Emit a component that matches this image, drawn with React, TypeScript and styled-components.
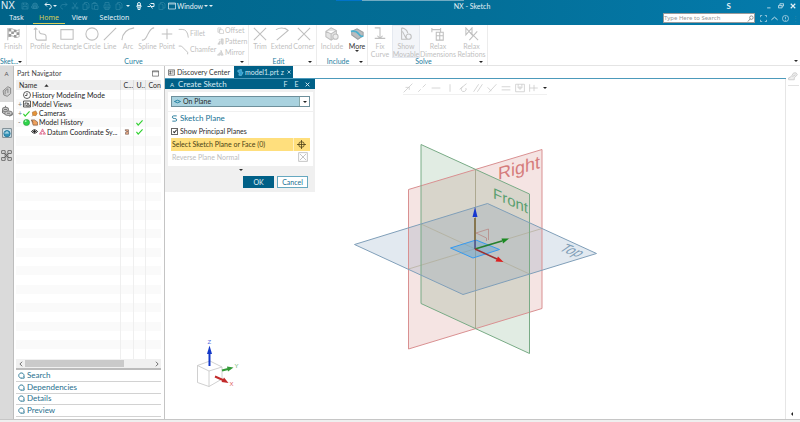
import React from "react";
import styled, { createGlobalStyle, css } from "styled-components";

const Global = createGlobalStyle`
  *, *::before, *::after { box-sizing: border-box; }
  html, body, #root { height: 100%; margin: 0; }
  body { overflow: hidden; font-family: Lato, "Noto Sans", sans-serif; font-size: 7px; line-height: 9px; color: #2b2b2b; background: #fff; }
  button, input, select { font: inherit; color: inherit; margin: 0; padding: 0; border: 0; background: none; border-radius: 0; }
  svg { display: block; flex: none; }
`;

const shapes: Record<string, React.ReactNode> = {
  save: <path d="M2 2h10l2 2v10H2zM5 2v4h6V2M4 14V9h8v5" />,
  saveAll: <path fill="currentColor" fillOpacity=".5" d="M3 7a5 5 0 0 1 10 0c3 1 2 6-1 6H4C0 13 0 8 3 7zM5 8h6v5H5z" />,
  undo: <path strokeWidth="2" d="M6 1L2 5l4 4M2 5h8c6 0 6 9 0 9" />,
  redo: <path d="M10 1l4 4-4 4M14 5H6c-6 0-6 9 0 9" />,
  cut: <path d="M4 1l6 10M12 1L6 11M6 12a2 2 0 1 1-4 0 2 2 0 0 1 4 0M14 12a2 2 0 1 1-4 0 2 2 0 0 1 4 0" />,
  copy: <path d="M5 4V1h6l3 3v8h-4M2 4h6l2 2v9H2z" />,
  paste: <path d="M6 14H2V3h10v3M5 3V1h4v2M7 7h7v8H7z" />,
  print: <path d="M4 6V1h8v5M2 6h12v6H2zM4 10h8v5H4z" />,
  mic: <path strokeWidth="2" d="M8 1a3 3 0 0 1 0 6 3 3 0 0 1 0-6M4 7h8v3H4zM6 10v5h4v-5" />,
  swap: <path strokeWidth="2" d="M1 9h6M5 5l4 4M14 9H8l3 4M7 3h7v6" />,
  window: <path d="M1 2h14v12H1zM1 4h14" />,
  flag: (
    <>
      <path d="M2 1v14" />
      <path d="M3 2q3-1 6 1t6 0v8q-3 2-6 0t-6 0z" />
      <path stroke="none" fill="#999" d="M3 2h3v3H3zM9 3h3v3H9zM6 5h3v3H6zM12 6h3v3h-3zM3 8h3v3H3zM9 9h3v3H9z" />
    </>
  ),
  profile: <path d="M3 1v10q0 4 3 4h9v-4q0-3-4-3-4 0-4-4M1 3l2-2 2 2" />,
  rectangle: <path d="M1 3h14v11H1z" />,
  circle: <circle cx="8" cy="8" r="7" />,
  line: <path d="M1 15L15 1" />,
  arc: <path d="M1 15Q2 3 15 1" />,
  spline: <path d="M1 15c5 0 5-4 7-7s3-7 7-7" />,
  point: <path d="M8 2v12M2 8h12" />,
  fillet: <path d="M1 2h5q8 0 9 12" />,
  chamfer: <path d="M1 3h4l9 9v3" />,
  offset: <path d="M2 2h7v3H5v7H2zM6 6h7l2 3v6H6z" />,
  pattern: <path fill="currentColor" fillOpacity=".5" d="M9 2h5v12h-3zM7 7v7H2zM4 4h3" />,
  mirror: <path fill="currentColor" fillOpacity=".4" d="M9 14V3l5 11zM7 14V8l-6 6z" />,
  trim: <path d="M1 1l14 14M15 1L1 15" />,
  extend: <path d="M1 3q8-4 14 1L2 15M11 1l4 3" />,
  include: (
    <>
      <path fill="#e4e4e4" d="M1 5l6-4 6 3v7l-6 4-6-4zM1 5l6 3 6-4M7 8v7" />
      <circle cx="12" cy="11" r="3" fill="#eee" />
    </>
  ),
  more: (
    <>
      <path fill="#b9bcbe" stroke="#9ca1a4" d="M2 5l6-3 7 4v4l-6 4-7-5z" />
      <path stroke="#4ab0cf" strokeWidth="2" d="M1 5q6-1 9 3t5 2" />
    </>
  ),
  fix: <path d="M2 1h6v12M2 13h12M5 10l3 3 3-3" />,
  movable: <path d="M3 1v13h7M3 1q6 1 7 6M11 8a3 3 0 1 1 0 6 3 3 0 0 1 0-6M8 13l-4-8" />,
  dims: <path d="M1 1v5M11 1v5M1 3h10M6 6h8v9H6zM10 6v9M6 10h8" />,
  relations: <path d="M1 1v8l7-8v8zM14 5L5 15M6 6l9 9" />,
  search: <path d="M10 2a4 4 0 1 1 0 8 4 4 0 0 1 0-8M7 9l-5 6" />,
  full: <path d="M1 5V1h4M11 1h4v4M15 11v4h-4M5 15H1v-4" />,
  up: <path strokeWidth="2" d="M1 11l7-6 7 6" />,
  help: <path d="M8 1a7 7 0 1 1 0 14A7 7 0 0 1 8 1M8 4v5M8 11v2" />,
  min: <path d="M3 13h9" />,
  restore: <path d="M5 6V2h10v6h-4M1 7h10v6H1z" />,
  close: <path d="M2 2l12 12M14 2L2 14" />,
  clock: <path d="M8 1a7 7 0 1 1 0 14A7 7 0 0 1 8 1M8 4v5H4" />,
  views: <path d="M1 2h14v12H1zM4 12V6h5M7 12l3-6 3 6z" />,
  check: <path stroke="#2ed12e" strokeWidth="2.6" d="M1 9l4 5L15 3" />,
  camera: <path fill="#e59337" stroke="#a8703a" d="M3 5l8-3 3 6-3 5-7-1zM4 12l-2 3" />,
  ball: (
    <>
      <circle cx="8" cy="8" r="7" fill="#2fd44b" stroke="#219b35" />
      <circle cx="6" cy="5" r="2" fill="#b5f5bf" stroke="none" />
    </>
  ),
  folder: <path fill="#efa15d" stroke="#705040" d="M1 2h7l7 5v7H5zM1 2l4 6" />,
  eye: <path strokeWidth="2" d="M1 8q7-8 14 0-7 8-14 0M8 4v8M4 8h8" />,
  datum: <path fill="#f7b9cb" stroke="#d34d79" d="M8 2l3 6H5zM4 9l3 5H1zM12 9l3 5H9z" />,
  sheet: <path fill="#efb08c" stroke="#5a4037" d="M3 2h9v12H4V9l6-2-6-2z" />,
  clip: <path stroke="#888" fill="#cfcfcf" d="M4 13L3 7l7-6 4 2v8l-5 4zM6 12V7l4-3v6" />,
  gears: (
    <>
      <ellipse cx="6" cy="6" rx="4" ry="3" fill="#c9c9c9" stroke="#858585" />
      <ellipse cx="10" cy="11" rx="5" ry="3" fill="#c9c9c9" stroke="#858585" />
      <path stroke="#777" d="M2 7v3l3 2M15 11v2l-4 2M6 3V1M4 6h4M8 11h4" />
    </>
  ),
  globe: (
    <>
      <path stroke="#6b7c85" fill="#d6e7ef" d="M1 1h14v14H1z" />
      <circle cx="8" cy="9" r="5" fill="#3293b8" stroke="#23779b" />
      <path stroke="#d8eef5" d="M4 8h7M8 5v3" />
    </>
  ),
  nodes: <path stroke="#666" fill="#eee" d="M4 4l8 8M12 4l-8 8M1 1h5v4H1zM10 1h5v4h-5zM1 11h5v4H1zM10 11h5v4h-5zM6 6h4v4H6z" />,
  panel: <path d="M1 2h14v12H1zM1 4h14" />,
  doc: <path d="M1 2h14v12H1zM4 5h3v2H4zM9 5h4M4 9h3v2H4zM9 9h4" />,
  part: <path stroke="#76c7e6" fill="#2f9fd0" d="M2 3l8-2v5l4 2-4 7-6-1 2-6-4-1z" />,
  plane: <path stroke="#167a9c" d="M1 8l7-3 7 3-7 3z" />,
  sketch: <path strokeWidth="2" d="M13 2H6Q3 2 3 5t5 3 5 3-3 3H3" />,
  target: <path d="M8 0v16M0 8h16M8 3a5 5 0 1 1 0 10A5 5 0 0 1 8 3" />,
  flip: <path d="M1 1h14v14H1zM3 3l10 10M13 3L3 13" />,
  loop: <path strokeWidth="2" d="M9 14A6 6 0 1 1 13 11M8 14h6v-4" />,
  left: <path strokeWidth="2" d="M11 2L5 8l6 6" />,
  right: <path strokeWidth="2" d="M5 2l6 6-6 6" />,
  sortUp: <path stroke="none" fill="currentColor" d="M1 12L8 4l7 8z" />,
  stamp: <path stroke="#ccc" fill="#eee" d="M1 11l4-2 4-6h4l2 3-5 5v3H1zM7 9l5-3" />,
  snap1: <path d="M1 15L15 1M4 7h6v4" />,
  snap2: <path d="M2 14l4-4M9 7l5-5" />,
  snap3: <path d="M1 8h14" />,
  snap4: <path d="M8 2v12" />,
  snap5: <path d="M1 10L12 1M6 6a4 4 0 1 0 5 2" />,
  snap6: <path d="M1 14L9 2M7 14l8-12" />,
  snap7: <path d="M1 7l6 6M3 15L15 2" />,
  snap8: <path d="M1 6h14M1 11h14" />,
  snap9: <path d="M1 2h14v12H1zM5 2v6h6V2M8 5v6" />,
  snap10: <path d="M1 2v12M1 8h13M8 3v10" />,
};

const Icon = ({ n, s = 8, w = 1.4 }: { n: string; s?: number; w?: number }) => (
  <svg width={s} height={s} viewBox="0 0 16 16" fill="none" stroke="currentColor" strokeWidth={w} aria-hidden="true">
    {shapes[n]}
  </svg>
);

const Shell = styled.div`
  display: flex;
  flex-direction: column;
  height: 100vh;
`;
const Header = styled.header`
  position: relative;
  display: flex;
  flex-direction: column;
  height: 25px;
  flex: none;
  color: #e6f1f6;
  background: linear-gradient(90deg, #006388, #036f98 60%, #047bac);
`;
const Progress = styled.div`
  position: absolute;
  top: 0;
  left: 42%;
  width: 16%;
  height: 1px;
  background: linear-gradient(90deg, #0073c9 20%, #71abc3 20%);
`;
const TitleBar = styled.div`
  display: grid;
  grid-template-columns: 1fr auto 1fr;
  align-items: center;
  height: 12px;
`;
const QuickBar = styled.div`
  display: flex;
  align-items: center;
`;
const Brand = styled.span`
  width: 20px;
  padding-left: 1px;
  font-family: "Liberation Sans", Arial, sans-serif;
  font-size: 10px;
  line-height: 12px;
`;
const QuickButton = styled.button<{ $w?: number; $dim?: boolean }>`
  display: flex;
  flex: none;
  align-items: center;
  justify-content: center;
  gap: 1px;
  width: ${(p) => p.$w ?? 10}px;
  height: 12px;
  color: ${(p) => (p.$dim ? "#2d85a5" : "#e6f1f6")};
`;
const Caret = styled.span`
  border: 2px solid transparent;
  border-top-color: currentColor;
  border-bottom: 0;
`;
const AppTitle = styled.span`
  padding-left: 144px;
`;
const WinButtons = styled.div`
  display: flex;
  justify-content: flex-end;
  align-items: center;
  padding-right: 1px;
`;
const Session = styled.b`
  margin-right: 32px;
  font-size: 8px;
`;
const MenuBar = styled.nav`
  display: flex;
  align-items: center;
  height: 13px;
  padding-bottom: 1px;
`;
const MenuItem = styled.button<{ $w: number; $active?: boolean }>`
  width: ${(p) => p.$w}px;
  height: 11px;
  border-bottom: 1px solid ${(p) => (p.$active ? "#d9cf5a" : "transparent")};
  color: ${(p) => (p.$active ? "#d9cf5a" : "#e6f1f6")};
  font-family: "Noto Sans", sans-serif;
`;
const SearchBox = styled.label`
  display: flex;
  align-items: center;
  width: 92px;
  height: 10px;
  margin-left: auto;
  color: #555;
  background: #fff;
  border: 1px solid #9a9a9a;
`;
const SearchInput = styled.input`
  flex: 1;
  min-width: 0;
  font-family: "Noto Sans", sans-serif;
  font-size: 6px;
  &::placeholder { color: #999; opacity: 1; }
`;
const MenuIcons = styled.div`
  display: flex;
  padding-left: 2px;
`;

const Ribbon = styled.section`
  display: flex;
  flex: none;
  height: 41px;
  background: #fff;
  border-bottom: 1px solid #e4e4e4;
`;
const Group = styled.div<{ $w: number }>`
  display: flex;
  flex-direction: column;
  flex: none;
  width: ${(p) => p.$w}px;
  border-right: 1px solid #ececec;
`;
const Tools = styled.div<{ $cols: string }>`
  display: grid;
  grid-template-columns: ${(p) => p.$cols};
  height: 33px;
`;
const Tool = styled.button<{ $on?: boolean; $selected?: boolean }>`
  display: flex;
  flex-direction: column;
  align-items: center;
  padding-top: 2px;
  white-space: nowrap;
  line-height: 8px;
  color: ${(p) => (p.$on ? "#333" : "#bfbfbf")};
  ${(p) => p.$selected && css`background: #f3f5f9; box-shadow: inset 0 0 0 1px #e5e9f0;`}
`;
const ToolLabel = styled.span`
  margin-top: 1px;
  white-space: pre;
  text-align: center;
`;
const SmallTools = styled.div`
  display: flex;
  flex-direction: column;
  justify-content: space-around;
`;
const SmallTool = styled.button`
  display: flex;
  align-items: center;
  gap: 1px;
  color: #bfbfbf;
`;
const GroupFoot = styled.div`
  display: flex;
  align-items: center;
  height: 7px;
  padding-right: 4px;
  color: #1d7d9e;
  line-height: 7px;
  > span:first-child { flex: 1; text-align: center; }
  > span:last-child { color: #222; }
`;
const RibbonEnd = styled.div`
  flex: 1;
  display: flex;
  align-items: flex-end;
  justify-content: flex-end;
  padding: 0 2px 3px 0;
`;

const Body = styled.main`
  display: flex;
  flex: 1;
  min-height: 0;
`;
const Rail = styled.aside`
  display: flex;
  flex-direction: column;
  align-items: stretch;
  width: 14px;
  background: #dadada;
  border-right: 1px solid #bdbdbd;
`;
const RailButton = styled.button<{ $h: number; $active?: boolean }>`
  display: flex;
  align-items: center;
  justify-content: center;
  height: ${(p) => p.$h}px;
  color: #555;
  font-size: 6px;
  background: ${(p) => (p.$active ? "#fff" : "transparent")};
`;
const Navigator = styled.section`
  display: flex;
  flex-direction: column;
  width: 151px;
  padding: 0 3px 2px 2px;
  border-right: 1px solid #c4c4c4;
`;
const NavTitle = styled.div`
  display: flex;
  align-items: center;
  justify-content: space-between;
  height: 14px;
  padding: 1px 2px 0 1px;
  color: #444;
`;
const TreeWrap = styled.div`
  flex: 1;
  min-height: 0;
`;
const Tree = styled.table`
  width: 100%;
  height: 100%;
  border-collapse: collapse;
  table-layout: fixed;
`;
const Th = styled.th<{ $w?: number }>`
  width: ${(p) => (p.$w ? `${p.$w}px` : "auto")};
  height: 10px;
  padding: 0 0 0 3px;
  overflow: hidden;
  text-align: left;
  font-weight: 400;
  white-space: nowrap;
  background: #efefef;
  border-right: 1px solid #ddd;
  &:last-child { border-right: 0; }
`;
const SortLabel = styled.span`
  display: flex;
  align-items: center;
  gap: 7px;
`;
const Row = styled.tr`
  &:nth-child(even) { background: #fafafa; }
`;
const Td = styled.td`
  height: 9px;
  padding: 0;
  line-height: 8px;
  white-space: nowrap;
  border-right: 1px solid #efefef;
  &:last-child { border-right: 0; }
  > svg { margin: 0 auto; }
`;
const Node = styled.div<{ $indent: number }>`
  display: flex;
  align-items: center;
  gap: 1px;
  padding-left: ${(p) => p.$indent}px;
  color: #1c1c1c;
`;
const Twist = styled.span`
  width: 4px;
  color: #777;
`;
const HScroll = styled.div`
  display: flex;
  align-items: center;
  height: 9px;
  background: #f0f0f0;
`;
const ScrollButton = styled.button`
  display: flex;
  width: 9px;
  justify-content: center;
  color: #444;
`;
const Thumb = styled.div`
  width: 99px;
  height: 7px;
  margin-right: auto;
  background: #cacaca;
`;
const Sections = styled.div`
  display: grid;
  grid-auto-rows: 1fr;
  height: 49px;
  border-top: 2px solid #bcbcbc;
`;
const SectionButton = styled.button`
  display: flex;
  align-items: center;
  gap: 2px;
  padding-left: 2px;
  font-size: 8px;
  color: #1f6f8e;
  border-bottom: 1px solid #d2d2d2;
`;

const Workspace = styled.section`
  display: flex;
  flex-direction: column;
  flex: 1;
  min-width: 0;
`;
const Tabs = styled.div`
  display: flex;
  height: 13px;
  border-bottom: 1px solid #4c9abb;
`;
const Tab = styled.button<{ $active?: boolean }>`
  display: flex;
  align-items: center;
  gap: ${(p) => (p.$active ? 1 : 2)}px;
  width: ${(p) => (p.$active ? 59 : 69)}px;
  padding-left: 3px;
  white-space: nowrap;
  color: ${(p) => (p.$active ? "#d5ebf3" : "#333")};
  background: ${(p) => (p.$active ? "#006087" : "#fff")};
  > span { padding: 0 2px 0 1px; }
`;
const Canvas = styled.div`
  position: relative;
  flex: 1;
  min-height: 0;
  border-right: 1px solid #e6e6e6;
`;
const Scene = styled.svg`
  position: absolute;
  inset: 0;
  width: 100%;
  height: 100%;
  font-family: "Liberation Sans", Arial, sans-serif;
`;
const SnapBar = styled.div`
  position: absolute;
  left: 238px;
  top: 3px;
  display: flex;
  align-items: center;
  gap: 4px;
  height: 13px;
  color: #c8c8c8;
  border-bottom: 1px solid #f0f0f0;
  > button { display: flex; }
  > button:last-child { color: #222; }
`;
const RightStrip = styled.aside`
  display: flex;
  flex-direction: column;
  align-items: center;
  justify-content: space-between;
  width: 14px;
  padding-bottom: 2px;
`;
const StripTool = styled.button`
  display: flex;
  justify-content: center;
  align-items: center;
  width: 11px;
  height: 20px;
  border-bottom: 1px solid #e2e2e2;
`;
const StripArrow = styled.button`
  margin-right: 3px;
  margin-bottom: 1px;
  border: 2px solid transparent;
  border-right-color: #222;
  border-left: 0;
`;
const Status = styled.footer`
  flex: none;
  height: 3px;
  background: #efefef;
  border-top: 1px solid #c6c6c6;
`;

const Dialog = styled.form`
  position: absolute;
  left: 0;
  top: 0;
  width: 150px;
  padding: 0 2px 4px 3px;
  background: #f0f0f0;
`;
const DialogTitle = styled.div`
  display: flex;
  align-items: center;
  gap: 4px;
  height: 10px;
  margin: 0 -2px 3px -3px;
  padding: 0 4px 0 5px;
  color: #d8ebf3;
  background: #006087;
  > span:first-child { font-size: 6px; }
  > span:nth-child(2) { flex: 1; font-size: 8px; }
  > button { display: flex; width: 7px; justify-content: center; }
`;
const Card = styled.div`
  display: flex;
  flex-direction: column;
  margin-bottom: 1px;
  padding: 4px 3px;
  background: #fff;
`;
const PlaneCard = styled(Card)`
  padding: 1px 3px 3px;
`;
const Combo = styled.label`
  display: flex;
  align-items: center;
  gap: 2px;
  height: 11px;
  padding-left: 2px;
  background: #a9d2df;
  border: 1px solid #6d8f9b;
`;
const Select = styled.select`
  flex: 1;
  appearance: none;
`;
const ComboArrow = styled.span`
  display: flex;
  align-items: center;
  justify-content: center;
  width: 10px;
  height: 9px;
  color: #222;
  background: #fff;
  border-left: 1px solid #8aa;
`;
const CardTitle = styled.div`
  display: flex;
  align-items: center;
  gap: 2px;
  height: 11px;
  font-size: 8px;
  color: #177294;
`;
const CheckRow = styled.label`
  display: flex;
  align-items: center;
  gap: 2px;
  height: 14px;
`;
const Box = styled.input`
  appearance: none;
  display: grid;
  place-items: center;
  width: 7px;
  height: 7px;
  border: 1px solid #666;
  &:checked::after {
    content: "";
    width: 2px;
    height: 4px;
    border: solid #333;
    border-width: 0 1px 1px 0;
    transform: rotate(40deg);
  }
`;
const PickRow = styled.button<{ $active?: boolean }>`
  display: flex;
  align-items: center;
  justify-content: space-between;
  height: ${(p) => (p.$active ? 13 : 12)}px;
  padding: 0 ${(p) => (p.$active ? 4 : 2)}px 0 1px;
  color: ${(p) => (p.$active ? "#4a3f16" : "#bdbdbd")};
  background: ${(p) => (p.$active ? "linear-gradient(90deg, #ffdf7d 122px, #fff0be 122px, #fff0be 123px, #ffdf7d 123px)" : "#fff")};
`;
const Fold = styled.div`
  display: flex;
  justify-content: center;
  padding-top: 2px;
  height: 9px;
`;
const Actions = styled.div`
  display: flex;
  justify-content: flex-end;
  gap: 3px;
  padding-right: 5px;
`;
const ActionButton = styled.button<{ $primary?: boolean }>`
  width: 31px;
  height: 12px;
  line-height: 10px;
  color: ${(p) => (p.$primary ? "#e4f2f7" : "#176e90")};
  background: ${(p) => (p.$primary ? "#006087" : "#fff")};
  border: 1px solid ${(p) => (p.$primary ? "#006087" : "#66a8c0")};
`;

const curve = [["profile", "Profile"], ["rectangle", "Rectangle"], ["circle", "Circle"], ["line", "Line"], ["arc", "Arc"], ["spline", "Spline"], ["point", "Point"]];
const solve = [["fix", "Fix\nCurve"], ["movable", "Show\nMovable"], ["dims", "Relax\nDimensions"], ["relations", "Relax\nRelations"]];

const BigTool = ({ icon, label, on, selected, caret }: { icon: string; label: string; on?: boolean; selected?: boolean; caret?: boolean }) => (
  <Tool $on={on} $selected={selected}>
    <Icon n={icon} s={14} w={1.2} />
    <ToolLabel>{label}</ToolLabel>
    {caret && <Caret />}
  </Tool>
);
const Foot = ({ label }: { label: string }) => (
  <GroupFoot>
    <span>{label}</span>
    <Caret />
  </GroupFoot>
);

const Model = () => (
  <Scene viewBox="165 79 620 340" fill="none" aria-label="Datum planes">
    <g fillOpacity=".16">
      <path fill="#c15650" d="M408.500 189.500L542 149.500V308.500L408.500 349z" />
      <path fill="#448850" d="M421 144.500L529.500 194V353.500L421 303.500z" />
      <path fill="#4a76a1" d="M354.500 244.500L487.500 203.500L596.500 253.500L463 294.500z" />
    </g>
    <path stroke="#a29d81" strokeWidth=".8" d="M475.500 169.500V328.500" />
    <path stroke="#aca78e" strokeWidth=".6" d="M408.500 269L542 228.500M421 224L529.500 274" />
    <path stroke="#d99091" d="M408.500 189.500L542 149.500V308.500L408.500 349z" />
    <path stroke="#79ab86" d="M421 144.500L529.500 194V353.500L421 303.500z" />
    <path stroke="#809fb9" d="M354.500 244.500L487.500 203.500L596.500 253.500L463 294.500z" />
    <text transform="translate(498 180) skewY(-16)" fontSize="18" fill="#d57c7c">Right</text>
    <text transform="translate(493 198) skewY(24)" fontSize="15" fill="#5b9f70">Front</text>
    <text transform="translate(558 250) rotate(20) skewX(-35)" fontSize="13" fill="#7f9db6">Top</text>
    <path stroke="#b78985" strokeWidth=".8" d="M476 233L488.500 229V240M476 233L486.500 238V241" />
    <path fill="#4a9ad8" fillOpacity=".35" stroke="#359af0" d="M450.500 248L476 240L499.500 249.500L473 258z" />
    <path stroke="#4c4c86" strokeWidth="1.500" d="M475 249V238" />
    <path stroke="#86764f" strokeWidth="2" d="M475 240V218" />
    <path fill="#1637cf" d="M475 207L477.500 217H472.500z" />
    <path stroke="#27802f" strokeWidth="1.500" d="M475 249L502 241" />
    <path fill="#1b8a22" d="M509 238.500L501.500 238.500L503 243.500z" />
    <path stroke="#9c3233" strokeWidth="1.500" d="M475 249L497 259" />
    <path fill="#dc2020" d="M503.500 262L495.500 261.500L498 256.500z" />
    <path stroke="#c4c4c4" strokeWidth=".8" d="M197.500 365.500L210 361L222 367V379L209 386.500L197.500 382.500zM197.500 365.500L209 371L222 367M209 371V386.500" />
    <path stroke="#1338c8" strokeWidth="2" d="M209.500 366V352" />
    <path fill="#1338c8" d="M209.500 345.500L212 354H207z" />
    <path stroke="#339a38" strokeWidth="2" d="M222 370.500L228 369" />
    <path fill="#339a38" d="M233.500 367.500L227 366.500L228 371.500z" />
    <path stroke="#c22a2a" strokeWidth="2" d="M215 376.500L224 380.500" />
    <path fill="#c22a2a" d="M228.500 383L221.500 382L224 377.500z" />
    <text x="207.500" y="344" fontSize="6" fill="#5a73df">Z</text>
    <text x="234.500" y="368" fontSize="6" fill="#6bb370">Y</text>
    <text x="229.500" y="386" fontSize="6" fill="#e05a5a">X</text>
  </Scene>
);

const treeRows: { body: React.ReactNode; c?: string; u?: boolean }[] = [
  { body: <Node $indent={7}><Icon n="clock" s={8} />History Modeling Mode</Node> },
  { body: <Node $indent={2}><Twist>+</Twist><Icon n="views" s={8} />Model Views</Node> },
  { body: <Node $indent={2}><Twist>+</Twist><Icon n="check" s={7} /><Icon n="camera" s={7} />Cameras</Node> },
  { body: <Node $indent={2}><Twist>-</Twist><Icon n="ball" s={7} /><Icon n="folder" s={7} />Model History</Node>, u: true },
  { body: <Node $indent={15}><Icon n="eye" s={7} /><Icon n="datum" s={7} />Datum Coordinate Sy...</Node>, c: "sheet", u: true },
];

export default function App() {
  return (
    <Shell>
      <Global />
      <Header>
        <Progress />
        <TitleBar>
          <QuickBar>
            <Brand>NX</Brand>
            <QuickButton $dim aria-label="Save"><Icon n="save" /></QuickButton>
            <QuickButton $dim aria-label="Save to cloud"><Icon n="saveAll" /></QuickButton>
            <QuickButton $w={20} aria-label="Undo"><Icon n="undo" /><Caret /></QuickButton>
            <QuickButton $dim $w={8} aria-label="Redo"><Icon n="redo" /></QuickButton>
            <QuickButton $dim $w={14} aria-label="Cut"><Icon n="cut" /></QuickButton>
            <QuickButton $dim $w={8} aria-label="Copy"><Icon n="copy" /></QuickButton>
            <QuickButton $dim aria-label="Paste"><Icon n="paste" /></QuickButton>
            <QuickButton $dim $w={14} aria-label="Print"><Icon n="print" /></QuickButton>
            <QuickButton $dim aria-label="Repeat"><Icon n="copy" /></QuickButton>
            <QuickButton $w={8} aria-label="Repeat options"><Caret /></QuickButton>
            <QuickButton $w={14} aria-label="Touch mode"><Icon n="mic" /></QuickButton>
            <QuickButton aria-label="Switch"><Icon n="swap" /></QuickButton>
            <QuickButton $dim $w={12} aria-label="Cascade"><Icon n="copy" /></QuickButton>
            <QuickButton $w={40}><Icon n="window" />Window<Caret /></QuickButton>
            <QuickButton $w={6} aria-label="Customize"><Caret /></QuickButton>
          </QuickBar>
          <AppTitle>NX - Sketch</AppTitle>
          <WinButtons>
            <Session>S</Session>
            <QuickButton $w={12} aria-label="Minimize"><Icon n="min" s={6} w={2} /></QuickButton>
            <QuickButton $w={12} aria-label="Restore"><Icon n="restore" s={6} w={2} /></QuickButton>
            <QuickButton $w={12} aria-label="Close"><Icon n="close" s={6} w={3} /></QuickButton>
          </WinButtons>
        </TitleBar>
        <MenuBar>
          <MenuItem $w={33}>Task</MenuItem>
          <MenuItem $w={32} $active>Home</MenuItem>
          <MenuItem $w={29}>View</MenuItem>
          <MenuItem $w={41}>Selection</MenuItem>
          <SearchBox>
            <SearchInput placeholder="Type Here to Search" aria-label="Search" />
            <Icon n="search" s={7} />
          </SearchBox>
          <MenuIcons>
            <QuickButton $w={12} aria-label="Full screen"><Icon n="full" s={7} /></QuickButton>
            <QuickButton aria-label="Collapse ribbon"><Icon n="up" s={7} /></QuickButton>
            <QuickButton $w={12} aria-label="Help"><Icon n="help" s={7} /></QuickButton>
            <QuickButton $dim $w={9}>⋮</QuickButton>
          </MenuIcons>
        </MenuBar>
      </Header>

      <Ribbon>
        <Group $w={27}>
          <Tools $cols="1fr"><BigTool icon="flag" label="Finish" /></Tools>
          <Foot label="Sket..." />
        </Group>
        <Group $w={222}>
          <Tools $cols="26px 28px 22px 14px 22px 17px 22px 39px 1fr">
            {curve.map(([i, l]) => <BigTool key={i} icon={i} label={l} />)}
            <SmallTools>
              <SmallTool><Icon n="fillet" s={11} />Fillet</SmallTool>
              <SmallTool><Icon n="chamfer" s={11} />Chamfer</SmallTool>
            </SmallTools>
            <SmallTools>
              <SmallTool><Icon n="offset" s={7} />Offset</SmallTool>
              <SmallTool><Icon n="pattern" s={7} />Pattern</SmallTool>
              <SmallTool><Icon n="mirror" s={7} />Mirror</SmallTool>
            </SmallTools>
          </Tools>
          <Foot label="Curve" />
        </Group>
        <Group $w={68}>
          <Tools $cols="22px 21px 24px">
            <BigTool icon="trim" label="Trim" />
            <BigTool icon="extend" label="Extend" />
            <BigTool icon="trim" label="Corner" />
          </Tools>
          <Foot label="Edit" />
        </Group>
        <Group $w={51}>
          <Tools $cols="30px 1fr">
            <BigTool icon="include" label="Include" />
            <BigTool icon="more" label="More" on caret />
          </Tools>
          <Foot label="Include" />
        </Group>
        <Group $w={120}>
          <Tools $cols="24px 28px 36px 1fr">
            {solve.map(([i, l]) => <BigTool key={i} icon={i} label={l} selected={i === "movable"} />)}
          </Tools>
          <Foot label="Solve" />
        </Group>
        <RibbonEnd><Caret /></RibbonEnd>
      </Ribbon>

      <Body>
        <Rail>
          <RailButton $h={14}>A</RailButton>
          <RailButton $h={22} aria-label="Assembly Navigator"><Icon n="clip" s={11} /></RailButton>
          <RailButton $h={18} $active aria-label="Part Navigator"><Icon n="gears" s={12} /></RailButton>
          <RailButton $h={26} aria-label="Web Browser"><Icon n="globe" s={10} /></RailButton>
          <RailButton $h={18} aria-label="Process Studio"><Icon n="nodes" s={11} /></RailButton>
        </Rail>
        <Navigator>
          <NavTitle>Part Navigator<Icon n="panel" s={7} /></NavTitle>
          <TreeWrap>
            <Tree>
              <thead>
                <tr>
                  <Th><SortLabel>Name<Icon n="sortUp" s={5} /></SortLabel></Th>
                  <Th $w={13}>C...</Th>
                  <Th $w={12}>U..</Th>
                  <Th $w={16}>Con</Th>
                </tr>
              </thead>
              <tbody>
                {Array.from({ length: 29 }, (_, i) => {
                  const r = treeRows[i];
                  return (
                    <Row key={i}>
                      <Td>{r?.body}</Td>
                      <Td>{r?.c && <Icon n={r.c} s={6} />}</Td>
                      <Td>{r?.u && <Icon n="check" s={7} />}</Td>
                      <Td />
                    </Row>
                  );
                })}
              </tbody>
            </Tree>
          </TreeWrap>
          <HScroll>
            <ScrollButton aria-label="Scroll left"><Icon n="left" s={6} /></ScrollButton>
            <Thumb />
            <ScrollButton aria-label="Scroll right"><Icon n="right" s={6} /></ScrollButton>
          </HScroll>
          <Sections>
            {["Search", "Dependencies", "Details", "Preview"].map((s) => (
              <SectionButton key={s}><Icon n="loop" s={7} />{s}</SectionButton>
            ))}
          </Sections>
        </Navigator>
        <Workspace>
          <Tabs>
            <Tab><Icon n="doc" s={7} />Discovery Center</Tab>
            <Tab $active><Icon n="part" s={7} />model1.prt<span>z</span><Icon n="close" s={4} w={3} /></Tab>
          </Tabs>
          <Canvas>
            <Model />
            <SnapBar>
              {Array.from({ length: 10 }, (_, i) => (
                <button key={i} aria-label={`Snap ${i + 1}`}><Icon n={`snap${i + 1}`} s={10} w={1.2} /></button>
              ))}
              <button aria-label="More snap options"><Caret /></button>
            </SnapBar>
            <Dialog onSubmit={(e) => e.preventDefault()}>
              <DialogTitle>
                <span>A</span>
                <span>Create Sketch</span>
                <button type="button">F</button>
                <button type="button">E</button>
                <button type="button" aria-label="Close"><Icon n="close" s={5} w={3} /></button>
              </DialogTitle>
              <Card>
                <Combo>
                  <Icon n="plane" s={7} w={2} />
                  <Select aria-label="Sketch type"><option>On Plane</option></Select>
                  <ComboArrow><Caret /></ComboArrow>
                </Combo>
              </Card>
              <PlaneCard>
                <CardTitle><Icon n="sketch" s={7} />Sketch Plane</CardTitle>
                <CheckRow><Box type="checkbox" defaultChecked />Show Principal Planes</CheckRow>
                <PickRow type="button" $active>Select Sketch Plane or Face (0)<Icon n="target" s={9} /></PickRow>
                <PickRow type="button">Reverse Plane Normal<Icon n="flip" s={10} /></PickRow>
              </PlaneCard>
              <Fold><Caret /></Fold>
              <Actions>
                <ActionButton type="submit" $primary>OK</ActionButton>
                <ActionButton type="button">Cancel</ActionButton>
              </Actions>
            </Dialog>
          </Canvas>
        </Workspace>
        <RightStrip>
          <StripTool aria-label="View tools"><Icon n="stamp" s={10} /></StripTool>
          <StripArrow aria-label="Expand" />
        </RightStrip>
      </Body>
      <Status />
    </Shell>
  );
}
